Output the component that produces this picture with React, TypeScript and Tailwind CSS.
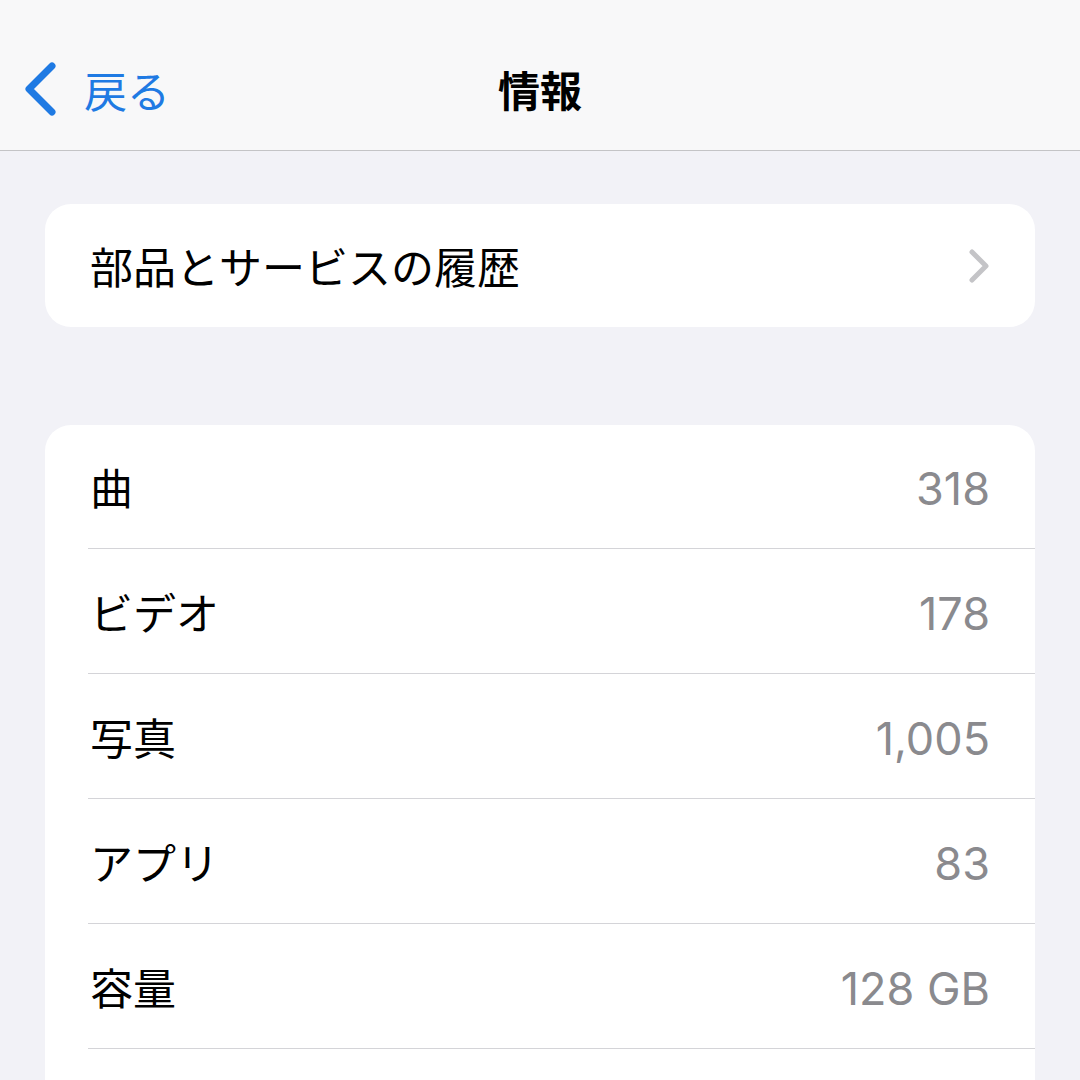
import React from "react";

const jp = { fontFamily: '"Noto Sans CJK JP", "Noto Sans", sans-serif' };
const num = { fontFamily: 'Inter, "Noto Sans CJK JP", sans-serif' };

const rows: { label: string; value: string }[] = [
  { label: "曲", value: "318" },
  { label: "ビデオ", value: "178" },
  { label: "写真", value: "1,005" },
  { label: "アプリ", value: "83" },
  { label: "容量", value: "128 GB" },
  { label: "", value: "" },
];

export default function App() {
  return (
    <div className="w-[1080px] h-[1080px] overflow-hidden bg-[#f2f2f7]" style={jp}>
      <header className="relative h-[151px] bg-[#f8f8f9] border-b border-[#c4c4c6] flex items-center pt-[28px]">
        <div className="flex items-center pl-[22px] text-[#1f7ae3]">
          <svg width="36" height="56" viewBox="0 0 36 56" fill="none">
            <polyline points="30,5 7,28 30,51" stroke="#1f7ae3" strokeWidth="7" strokeLinecap="round" strokeLinejoin="round" />
          </svg>
          <span className="ml-[26px] text-[43px] leading-none" style={jp}>戻る</span>
        </div>
        <div className="absolute left-0 right-0 top-0 h-[150px] pt-[28px] flex items-center justify-center pointer-events-none">
          <span className="text-[42px] font-bold leading-none text-black" style={jp}>情報</span>
        </div>
      </header>

      <div className="px-[45px] pt-[53px]">
        <div className="h-[123px] bg-white rounded-[26px] flex items-center justify-between pl-[45px] pr-[44px]">
          <span className="text-[43px] leading-none text-black" style={jp}>部品とサービスの履歴</span>
          <svg width="24" height="36" viewBox="0 0 24 36" fill="none">
            <polyline points="5,4 19,18 5,32" stroke="#c4c4c7" strokeWidth="5" strokeLinecap="round" strokeLinejoin="round" />
          </svg>
        </div>

        <div className="mt-[98px] bg-white rounded-t-[26px] pl-[43px]">
          {rows.map((r, i) => (
            <div
              key={i}
              className={`flex items-center justify-between pr-[45px] border-b border-[#d4d4d8] ${i === 0 ? "h-[124px]" : "h-[125px]"}`}
            >
              <span className="pl-[2px] text-[43px] leading-none text-black" style={jp}>{r.label}</span>
              <span className="text-[45px] leading-none text-[#8a8a8e] pt-[4px]" style={num}>{r.value}</span>
            </div>
          ))}
        </div>
      </div>
    </div>
  );
}
